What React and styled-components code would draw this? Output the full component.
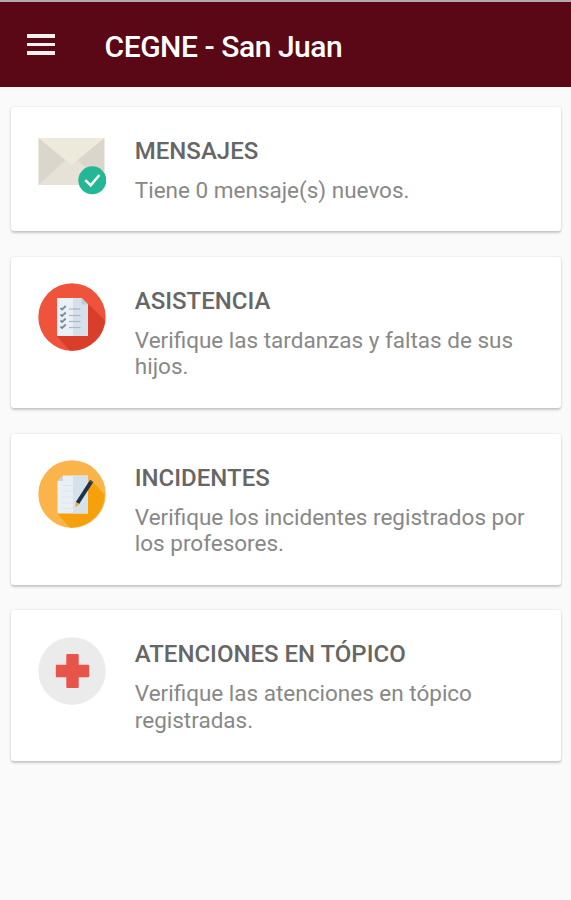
import React from "react";
import styled, { createGlobalStyle } from "styled-components";

const cards = [
  {
    id: "mensajes",
    title: "MENSAJES",
    text: ["Tiene 0 mensaje(s) nuevos."],
    icon: <MessageIcon />,
  },
  {
    id: "asistencia",
    title: "ASISTENCIA",
    text: ["Verifique las tardanzas y faltas de sus", "hijos."],
    icon: <AttendanceIcon />,
  },
  {
    id: "incidentes",
    title: "INCIDENTES",
    text: ["Verifique los incidentes registrados por", "los profesores."],
    icon: <IncidentIcon />,
  },
  {
    id: "topico",
    title: "ATENCIONES EN TÓPICO",
    text: ["Verifique las atenciones en tópico", "registradas."],
    icon: <HealthIcon />,
  },
];

function MessageIcon() {
  return (
    <Icon viewBox="0 0 68 68">
      <path d="M0.5 5h66v47h-66z" fill="#dbd6cc" />
      <path d="M0.5 52L28 26.500h11L66.500 52z" fill="#e7e2d7" />
      <path d="M0.5 5h66L36 30q-2.500 2-5 0z" fill="#edeadb" />
      <circle cx="54.3" cy="47.3" r="14" fill="#24b795" />
      <path
        d="M47.3 47.1l5.4 5.2 8.7-10.3"
        fill="none"
        stroke="#fff"
        strokeWidth="2.5"
      />
    </Icon>
  );
}

function AttendanceIcon() {
  return (
    <Icon viewBox="0 0 68 68">
      <circle cx="34" cy="34" r="33.7" fill="#f0533c" />
      <path
        d="M50 20.5L67 37.5A33.7 33.7 0 0 1 34 67.7L31.5 67.5 19 53z"
        fill="#d83e2a"
      />
      <path d="M19 15h24.5l6.5 6.5V53H19z" fill="#e9f0f6" />
      <path d="M35 15h8.5l6.5 6.5V53H35z" fill="#d5e0ea" />
      <path d="M43.5 15v6.5H50z" fill="#b9cad8" />
      {[25, 31.5, 37.5, 43.5].map((y) => (
        <g key={y} fill="none">
          <path
            d={`M22.5 ${y}l1.6 1.6 3.6-3.6`}
            stroke="#718aa1"
            strokeWidth="1.8"
          />
          <path d={`M31 ${y + 1}h11.5`} stroke="#adbbc8" strokeWidth="1.3" />
        </g>
      ))}
    </Icon>
  );
}

function IncidentIcon() {
  return (
    <Icon viewBox="0 0 68 68">
      <circle cx="34" cy="34" r="33.7" fill="#fab44a" />
      <path
        d="M54 21L66.5 34.5A33.7 33.7 0 0 1 34 67.7L31.5 67.5 19 53z"
        fill="#f6a00c"
      />
      <path d="M25 15.5h25v38H19.5V21z" fill="#e9f0f5" />
      <path d="M35 15.5h15v38H35z" fill="#d6e1ea" />
      <path d="M25 15.5V21h-5.5z" fill="#c5d2dc" />
      <path
        d="M25 25.5h18M24 31h16M24 37h14M24 43h12M24 48.5h14"
        stroke="#d9e3ea"
        strokeWidth="0.9"
      />
      <path d="M53 22L39.5 43" stroke="#1d3448" strokeWidth="4" />
      <path d="M53 22l0.8-1.2" stroke="#31475a" strokeWidth="4" />
      <path d="M37.8 41.9l3.4 2.3-3.9 3.3z" fill="#f3ac2b" />
    </Icon>
  );
}

function HealthIcon() {
  return (
    <Icon viewBox="0 0 68 68">
      <circle cx="34" cy="34" r="33.7" fill="#ebebeb" />
      <path
        d="M29.3 17h10.4q1 0 1 1v9.8h9.5q1 0 1 1v10.4q0 1-1 1h-9.5v9.8q0 1-1 1H29.3q-1 0-1-1v-9.8h-9.5q-1 0-1-1V28.8q0-1 1-1h9.5V18q0-1 1-1z"
        fill="#e7544a"
      />
    </Icon>
  );
}

function App() {
  return (
    <>
      <GlobalStyle />
      <Screen>
        <StatusLine />
        <Header>
          <MenuButton aria-label="Menu">
            <span />
            <span />
            <span />
          </MenuButton>
          <AppTitle>CEGNE - San Juan</AppTitle>
        </Header>
        <List>
          {cards.map((card) => (
            <Card key={card.id}>
              {card.icon}
              <Content>
                <CardTitle>{card.title}</CardTitle>
                {card.text.map((line) => (
                  <CardText key={line}>{line}</CardText>
                ))}
              </Content>
            </Card>
          ))}
        </List>
      </Screen>
    </>
  );
}
export default App;

const GlobalStyle = createGlobalStyle`
  * {
    box-sizing: border-box;
  }
  body {
    margin: 0;
    background: #fafafa;
    font-family: Roboto, sans-serif;
  }
`;
const Screen = styled.div`
  display: flex;
  flex-direction: column;
  min-height: 900px;
  background: #fafafa;
`;
const StatusLine = styled.div`
  height: 2px;
  background: #b5a9ab;
`;
const Header = styled.header`
  display: flex;
  align-items: center;
  height: 85px;
  padding-left: 26.5px;
  background: #5a0716;
`;
const MenuButton = styled.button`
  display: flex;
  flex-direction: column;
  gap: 5px;
  width: 28px;
  margin-right: 50px;
  padding: 0;
  border: none;
  background: none;
  span {
    height: 3.5px;
    background: #f7eff0;
  }
`;
const AppTitle = styled.h1`
  margin: 4px 0 0;
  color: #fff;
  font-weight: 500;
  font-size: 30px;
  line-height: 36px;
  letter-spacing: -0.45px;
  white-space: nowrap;
`;
const List = styled.main`
  display: flex;
  flex-direction: column;
  gap: 25.5px;
  padding: 19.5px 10px 0 11px;
`;
const Card = styled.section`
  display: flex;
  align-items: flex-start;
  padding: 26.5px 20px 28.6px 27px;
  border-radius: 3px;
  background: #fff;
  box-shadow: 0 1.5px 2.5px rgba(0, 0, 0, 0.2), 0 0 2px rgba(0, 0, 0, 0.08);
`;
const Icon = styled.svg`
  flex: none;
  width: 68px;
  height: 68px;
`;
const Content = styled.div`
  margin: 3.5px 0 0 28.8px;
`;
const CardTitle = styled.h2`
  margin: 0 0 12px;
  color: #666;
  font-weight: 500;
  font-size: 24px;
  line-height: 28px;
  white-space: nowrap;
`;
const CardText = styled.p`
  margin: 0;
  color: #888;
  font-size: 22.5px;
  line-height: 26.3px;
  white-space: nowrap;
`;
